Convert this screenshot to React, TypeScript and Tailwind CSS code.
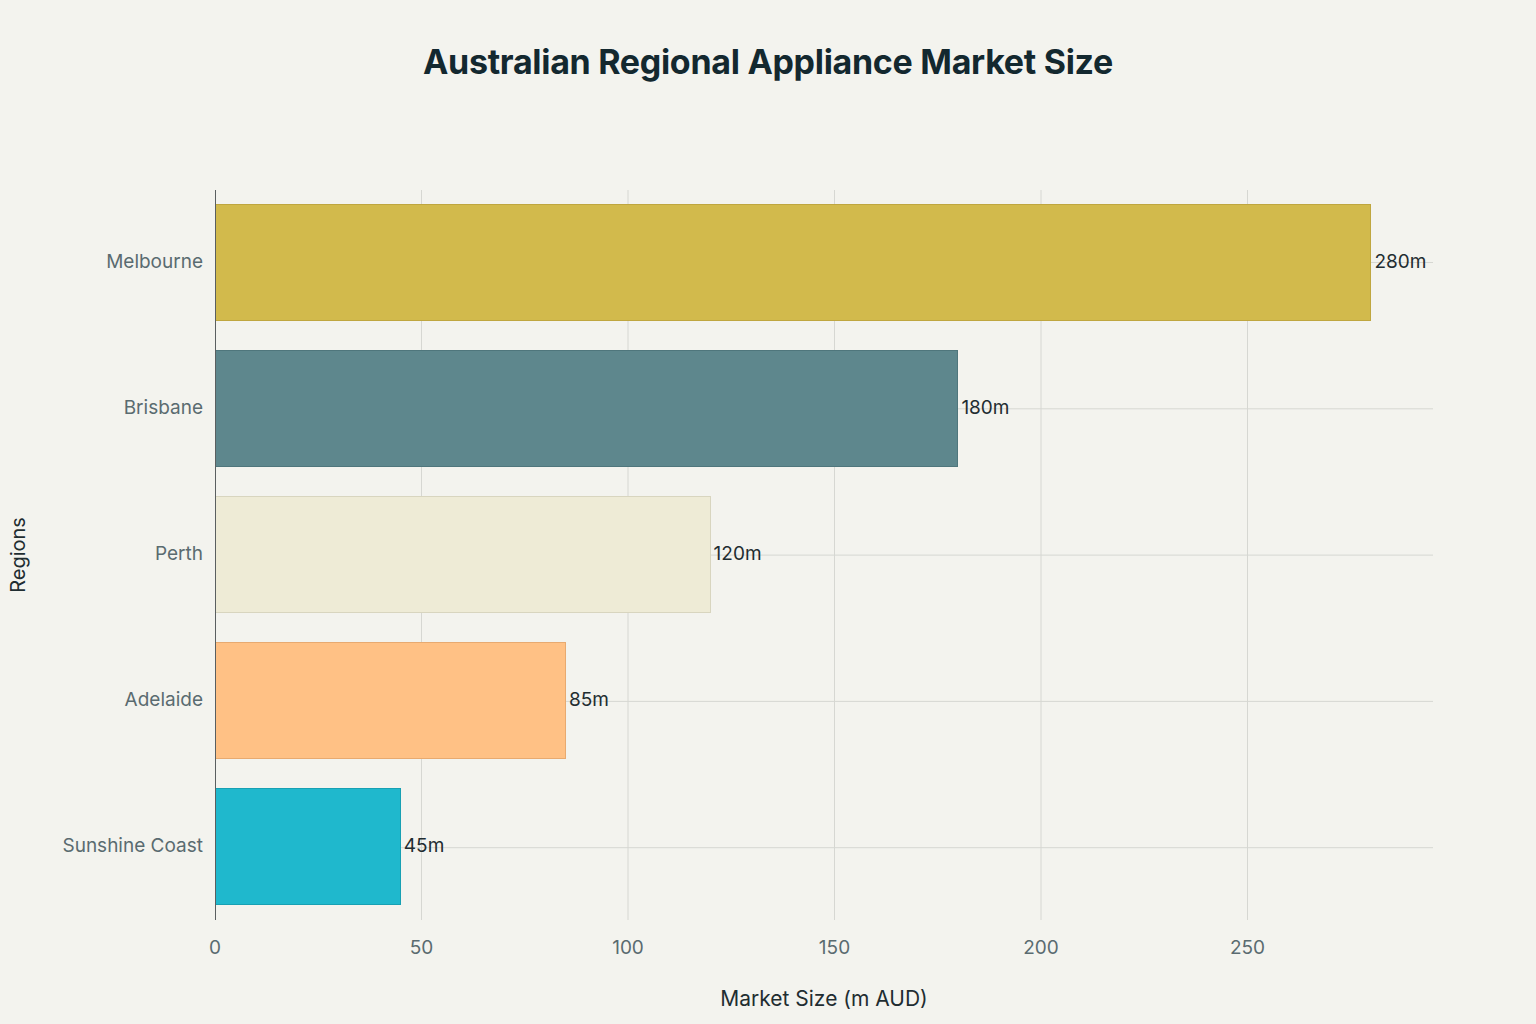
import React from "react";

const data = [
  { name: "Melbourne", v: 280, c: "#d2ba4c", b: "#bfa63f" },
  { name: "Brisbane", v: 180, c: "#5e878d", b: "#4f767c" },
  { name: "Perth", v: 120, c: "#eeebd6", b: "#d8d5bf" },
  { name: "Adelaide", v: 85, c: "#ffc185", b: "#e8aa70" },
  { name: "Sunshine Coast", v: 45, c: "#1fb8cd", b: "#17a0b3" },
];
const PX = 4.13;
const ticks = [0, 50, 100, 150, 200, 250];

export default function App() {
  const font = { fontFamily: "Inter, 'Noto Sans', sans-serif" };
  return (
    <div className="w-[1536px] h-[1024px] bg-[#f3f3ee] flex flex-col" style={font}>
      <div className="h-[190px] pt-[42px] text-center text-[34px] font-bold text-[#13282f] tracking-[-0.3px] leading-[40px]">
        Australian Regional Appliance Market Size
      </div>
      <div className="flex">
        <div className="w-[35px] h-[730px] flex items-center justify-center">
          <div className="-rotate-90 whitespace-nowrap text-[20px] text-[#1f2d31]">Regions</div>
        </div>
        <div className="w-[168px] h-[730px] flex flex-col py-[14px] gap-[29px]">
          {data.map((d) => (
            <div key={d.name} className="h-[117px] flex items-center justify-end text-[19px] text-[#5a6b70]">
              {d.name}
            </div>
          ))}
        </div>
        <div className="w-[12px]" />
        <div className="flex flex-col">
          <div className="relative w-[1218px] h-[730px]">
            <svg className="absolute inset-0" width="1218" height="730">
              {ticks.slice(1).map((t) => (
                <line key={t} x1={t * PX} x2={t * PX} y1={0} y2={730} stroke="#d6d7d2" strokeWidth="1" />
              ))}
              {data.map((d, i) => (
                <line key={d.name} x1={0} x2={1218} y1={72.5 + i * 146.3} y2={72.5 + i * 146.3} stroke="#d6d7d2" strokeWidth="1" />
              ))}
            </svg>
            <div className="absolute inset-0 flex flex-col py-[14px] gap-[29px]">
              {data.map((d) => (
                <div key={d.name} className="h-[117px] flex items-center">
                  <div className="h-full border" style={{ width: d.v * PX, background: d.c, borderColor: d.b }} />
                  <span className="ml-[3px] text-[19px] text-[#1f2d31]">{d.v}m</span>
                </div>
              ))}
            </div>
            <div className="absolute left-0 top-0 bottom-0 w-px bg-[#5a5f60]" />
          </div>
          <div className="relative h-[52px]">
            {ticks.map((t) => (
              <span key={t} className="absolute top-[14px] -translate-x-1/2 text-[19px] text-[#5a6b70]" style={{ left: t * PX }}>
                {t}
              </span>
            ))}
          </div>
          <div className="text-center text-[21px] text-[#1f2d31] pt-[11px]">Market Size (m AUD)</div>
        </div>
      </div>
    </div>
  );
}
